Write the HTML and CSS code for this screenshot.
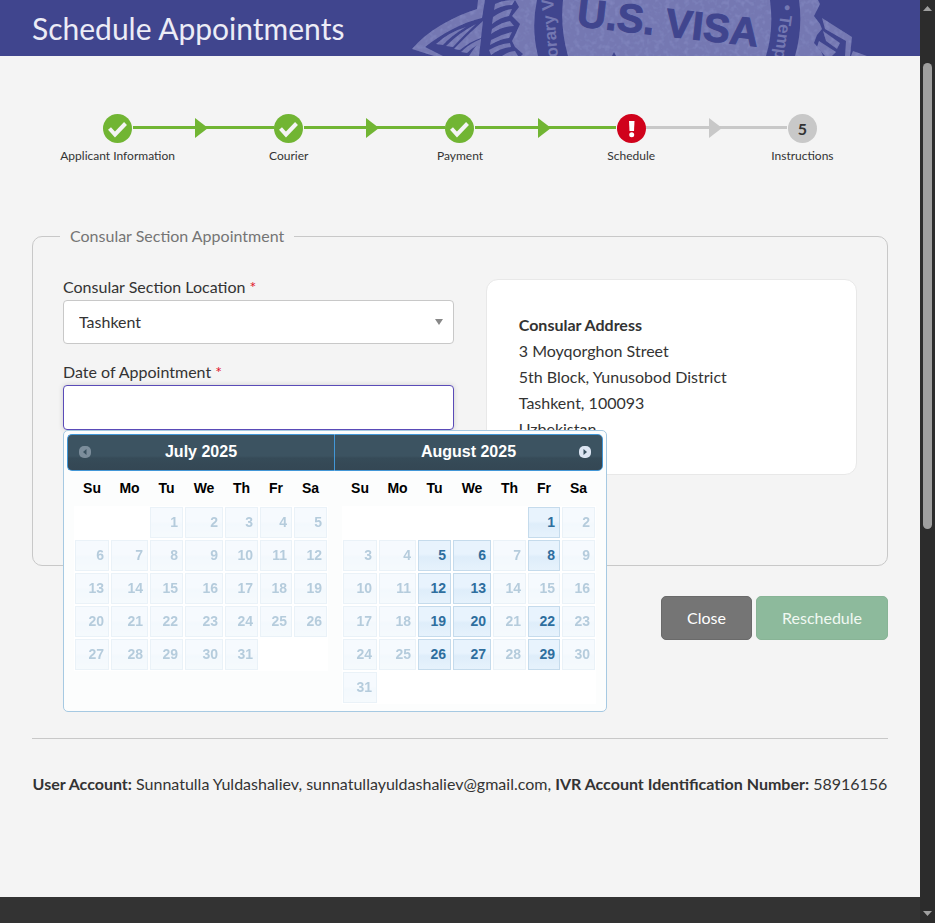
FILE: index.html
```html
<!DOCTYPE html>
<html lang="en">
<head>
<meta charset="utf-8">
<title>Schedule Appointments</title>
<link rel="stylesheet" href="styles.css">
</head>
<body>
<div class="page">
  <header class="banner">
    <h1>Schedule Appointments</h1>
    <svg class="stamp" width="465" height="56" viewBox="0 0 465 56" aria-hidden="true">
      <defs>
        <filter id="grain" x="0" y="0" width="100%" height="100%">
          <feTurbulence type="fractalNoise" baseFrequency="0.2" numOctaves="2" seed="4"/>
          <feColorMatrix values="0 0 0 0 .25  0 0 0 0 .27  0 0 0 0 .56  0 0 0 1.4 -.65"/>
          <feComposite in2="SourceGraphic" operator="in" result="n"/>
          <feMerge><feMergeNode in="SourceGraphic"/><feMergeNode in="n"/></feMerge>
        </filter>
      </defs>
      <g filter="url(#grain)">
        <path class="ink" d="M110 0H413L415 4L412 10L409 16L415 24L417 29L412 35L409 43L416 51L418 56H116L118 54L110 47L107 41L111 33L115 24L107 16L114 7Z"/>
        <path class="ink" fill-rule="evenodd" d="M73 0H80L77 18C58 22 35 35 20 47L38 56H29L7 49C22 31 47 17 72 9Z"/>
        <path class="ink" d="M31 44Q44 32 61 27Q46 36 38 45ZM41 46Q55 32 71 24Q58 36 48 47ZM49 49Q61 36 78 21L76 38Q66 41 55 50ZM56 52Q65 43 76 39L74 56H64Q69 48 72 45Q66 49 62 53Z"/>
        <path class="ink" d="M90 4Q97 0 110 0L107 5Q98 5 89 10ZM88 17Q98 10 107 9L104 16Q96 17 87 24ZM87 29Q97 22 105 21L109 26Q97 26 86 34ZM86 40Q96 34 107 32L104 38Q95 39 85 45ZM84 50Q94 44 105 43L106 47Q96 48 86 55ZM97 56Q104 51 110 51L113 56Z"/>
        <path class="ink" d="M417 18L447 37L445 56H440L441 41L420 29ZM418 31L435 43L432 49L421 41ZM414 41L431 52L427 56H420L412 47ZM448 51L462 56H446Z"/>
      </g>
      <path class="ring" d="M132 0H394Q398 28 390 56H133Q126 28 132 0Z"/>
      <path class="ink" filter="url(#grain)" d="M158 0H365Q369 30 361 56H163Q155 28 158 0Z"/>
      <path class="ring" d="M209 52L211 56H207Z"/>
      <text class="visa" transform="translate(171 26) rotate(6.500)">U.S. VISA</text>
      <text class="rim" transform="translate(153 57) rotate(-95)">orary V</text>
      <text class="rim" transform="translate(377 4) rotate(98)">• Temp</text>
    </svg>
  </header>

  <main>
    <ol class="steps">
      <li class="done"><span class="dot"><svg width="29" height="29" viewBox="0 0 29 29"><path d="M6.500 14.500L12 20.500L22.500 9.500" fill="none" stroke="#f4f4f4" stroke-width="4"/></svg></span><span class="name">Applicant Information</span></li>
      <li class="done"><span class="dot"><svg width="29" height="29" viewBox="0 0 29 29"><path d="M6.500 14.500L12 20.500L22.500 9.500" fill="none" stroke="#f4f4f4" stroke-width="4"/></svg></span><span class="name">Courier</span></li>
      <li class="done"><span class="dot"><svg width="29" height="29" viewBox="0 0 29 29"><path d="M6.500 14.500L12 20.500L22.500 9.500" fill="none" stroke="#f4f4f4" stroke-width="4"/></svg></span><span class="name">Payment</span></li>
      <li class="current"><span class="dot"><svg width="29" height="29" viewBox="0 0 29 29" fill="#fff"><path d="M12 7H17.500L17 17H12.500Z"/><circle cx="14.700" cy="20.700" r="2.500"/></svg></span><span class="name">Schedule</span></li>
      <li><span class="dot">5</span><span class="name">Instructions</span></li>
    </ol>

    <form>
      <fieldset>
        <legend>Consular Section Appointment</legend>
        <div class="fields">
          <div>
            <label for="location">Consular Section Location <span class="req">*</span></label>
            <div class="select-wrap">
              <select id="location"><option>Tashkent</option></select>
            </div>
            <label for="date">Date of Appointment <span class="req">*</span></label>
            <div class="date-wrap">
              <input id="date" type="text" autocomplete="off">
              <div class="picker">
                <section class="month first">
                  <div class="bar left"><button type="button" class="nav off" aria-label="Prev"><svg width="12" height="12" viewBox="0 0 12 12"><rect width="12" height="12" rx="5" fill="#dce5f2"/><path d="M7.500 3V9L4 6Z" fill="#38505f"/></svg></button><span>July 2025</span><i></i></div>
                  <table>
                    <thead><tr><th>Su</th><th>Mo</th><th>Tu</th><th>We</th><th>Th</th><th>Fr</th><th>Sa</th></tr></thead>
                    <tbody>
                      <tr><td></td><td></td><td><span>1</span></td><td><span>2</span></td><td><span>3</span></td><td><span>4</span></td><td><span>5</span></td></tr>
                      <tr><td><span>6</span></td><td><span>7</span></td><td><span>8</span></td><td><span>9</span></td><td><span>10</span></td><td><span>11</span></td><td><span>12</span></td></tr>
                      <tr><td><span>13</span></td><td><span>14</span></td><td><span>15</span></td><td><span>16</span></td><td><span>17</span></td><td><span>18</span></td><td><span>19</span></td></tr>
                      <tr><td><span>20</span></td><td><span>21</span></td><td><span>22</span></td><td><span>23</span></td><td><span>24</span></td><td><span>25</span></td><td><span>26</span></td></tr>
                      <tr><td><span>27</span></td><td><span>28</span></td><td><span>29</span></td><td><span>30</span></td><td><span>31</span></td><td></td><td></td></tr>
                    </tbody>
                  </table>
                </section>
                <section class="month">
                  <div class="bar right"><i></i><span>August 2025</span><button type="button" class="nav" aria-label="Next"><svg width="12" height="12" viewBox="0 0 12 12"><rect width="12" height="12" rx="5" fill="#dce5f2"/><path d="M4.500 3V9L8 6Z" fill="#38505f"/></svg></button></div>
                  <table>
                    <thead><tr><th>Su</th><th>Mo</th><th>Tu</th><th>We</th><th>Th</th><th>Fr</th><th>Sa</th></tr></thead>
                    <tbody>
                      <tr><td></td><td></td><td></td><td></td><td></td><td><a href="#">1</a></td><td><span>2</span></td></tr>
                      <tr><td><span>3</span></td><td><span>4</span></td><td><a href="#">5</a></td><td><a href="#">6</a></td><td><span>7</span></td><td><a href="#">8</a></td><td><span>9</span></td></tr>
                      <tr><td><span>10</span></td><td><span>11</span></td><td><a href="#">12</a></td><td><a href="#">13</a></td><td><span>14</span></td><td><span>15</span></td><td><span>16</span></td></tr>
                      <tr><td><span>17</span></td><td><span>18</span></td><td><a href="#">19</a></td><td><a href="#">20</a></td><td><span>21</span></td><td><a href="#">22</a></td><td><span>23</span></td></tr>
                      <tr><td><span>24</span></td><td><span>25</span></td><td><a href="#">26</a></td><td><a href="#">27</a></td><td><span>28</span></td><td><a href="#">29</a></td><td><span>30</span></td></tr>
                      <tr><td><span>31</span></td><td></td><td></td><td></td><td></td><td></td><td></td></tr>
                    </tbody>
                  </table>
                </section>
              </div>
            </div>
          </div>
          <address class="card"><strong>Consular Address</strong><br>3 Moyqorghon Street<br>5th Block, Yunusobod District<br>Tashkent, 100093<br>Uzbekistan</address>
        </div>
      </fieldset>
      <div class="actions">
        <button type="button" class="btn">Close</button>
        <button type="submit" class="btn go" disabled>Reschedule</button>
      </div>
    </form>
    <hr>
    <p class="account"><strong>User Account:</strong> Sunnatulla Yuldashaliev, sunnatullayuldashaliev@gmail.com, <strong>IVR Account Identification Number:</strong> 58916156</p>
  </main>
  <footer></footer>
</div>
<div class="scroll" aria-hidden="true">
  <svg width="9" height="5" viewBox="0 0 9 5"><path d="M0 5L4.500 0L9 5Z" fill="#9f9f9f"/></svg>
  <div class="track"><div class="thumb"></div></div>
  <svg width="9" height="5" viewBox="0 0 9 5"><path d="M0 0H9L4.500 5Z" fill="#9f9f9f"/></svg>
</div>
</body>
</html>
```
FILE: styles.css
```css
* { box-sizing: border-box; }
body {
  margin: 0;
  min-height: 100vh;
  display: flex;
  background: #f4f4f4;
  color: #333;
  font: 16px/26px Lato, "Liberation Sans", sans-serif;
}
.page { flex: 1; min-width: 0; display: flex; flex-direction: column; }

.banner {
  height: 56px;
  padding: 0 50px 0 32px;
  background: #40458e;
  display: flex;
  align-items: center;
  justify-content: space-between;
  overflow: hidden;
}
.banner h1 { margin: 0; font-size: 30px; line-height: 40px; font-weight: 400; color: #ececf6; white-space: nowrap; }
.stamp { flex: none; }
.ink { fill: #7478b2; }
.ring { fill: #40458e; }
.visa { font: bold 40px "Liberation Sans", sans-serif; fill: #40458e; stroke: #40458e; stroke-width: 1; }
.rim { font: bold 17px "Liberation Sans", sans-serif; fill: #7478b2; }

main { flex: 1; padding: 57px 32px 0; }

.steps { list-style: none; margin: 0; padding: 0; display: grid; grid-template-columns: repeat(5, 1fr); }
.steps li { position: relative; display: flex; flex-direction: column; align-items: center; --line: #c8c8c8; }
.steps .done { --line: #71b533; }
.steps li:not(:last-child)::before {
  content: "";
  position: absolute;
  top: 13px;
  left: calc(50% + 15px);
  width: calc(100% - 30px);
  height: 3px;
  background: var(--line);
}
.steps li:not(:last-child)::after {
  content: "";
  position: absolute;
  top: 5px;
  right: -5px;
  border: solid transparent;
  border-width: 10px 0 10px 13px;
  border-left-color: var(--line);
}
.dot {
  width: 29px;
  height: 29px;
  margin-top: 1px;
  border-radius: 50%;
  background: var(--line);
  display: grid;
  place-items: center;
  font-weight: 700;
}
.dot svg { display: block; }
.current .dot { background: #d0021b; }
.name { font-size: 12px; line-height: 16px; margin-top: 5px; }

fieldset { min-width: 0; margin: 59px 0 0; padding: 24px 30px 90px; border: 1px solid #c8c8c8; border-radius: 10px; }
legend { margin-left: -3px; padding: 0 10px; color: #757575; }
.fields { display: grid; grid-template-columns: 20fr 19fr; gap: 32px; align-items: start; padding-top: 6px; }
label { display: block; line-height: 22px; margin-top: -3px; }
.req { color: #e0142d; }
.select-wrap { position: relative; margin: 2px 0 20px; }
.select-wrap::after {
  content: "";
  position: absolute;
  right: 11px;
  top: 19px;
  border: solid transparent;
  border-width: 6px 4px 0;
  border-top-color: #888;
}
select, input {
  display: block;
  width: 100%;
  height: 44px;
  padding: 0 15px;
  border: 1px solid #c8c8c8;
  border-radius: 4px;
  background: #fff;
  color: #333;
  font: inherit;
  appearance: none;
}
.date-wrap { position: relative; margin-top: 2px; }
#date { height: 45px; border-color: #5a4bb8; box-shadow: 0 0 5px #ccc; outline: 0; }

.card {
  padding: 32px;
  border: 1px solid #e8e8e8;
  border-radius: 12px;
  background: #fff;
  font-style: normal;
  overflow-wrap: anywhere;
}

.picker {
  position: absolute;
  top: 45px;
  left: 0;
  z-index: 2;
  width: 544px;
  padding: 3px 3px 7px;
  display: flex;
  border: 1px solid #a6c9e2;
  border-radius: 5px;
  background: #fcfdfd;
  font-family: "Liberation Sans", sans-serif;
}
.month { flex: 1; min-width: 0; }
.first { flex: 0 0 267px; }
.bar {
  height: 37px;
  padding: 0 11px 1px;
  border: 1px solid #4297d7;
  background: linear-gradient(#3c5361 60%, #364b58 66%, #344754);
  color: #fff;
  display: flex;
  align-items: center;
  justify-content: space-between;
  font-weight: 700;
  line-height: 30px;
}
.bar i { width: 12px; }
.left { border-right: 0; border-radius: 5px 0 0 5px; }
.right { border-radius: 0 5px 5px 0; }
.nav { width: 12px; height: 12px; padding: 0; border: 0; background: none; display: block; }
.nav svg { display: block; }
.off { opacity: .4; }
table { width: 254px; margin: 0 8px; table-layout: fixed; border-collapse: collapse; font-size: 14px; line-height: 21px; }
.first table { margin: 0 7px; }
tbody { background: #fff; }
th { width: 35px; height: 35px; padding: 0; color: #000; }
th:nth-child(1) { width: 36px; }
th:nth-child(2) { width: 39px; }
th:nth-child(4) { width: 40px; }
th:nth-child(6) { width: 34px; }
td { height: 33px; padding: 1px; }
td span, td a {
  display: block;
  height: 31px;
  padding: 4px;
  border: 1px solid #c5dbec;
  background: linear-gradient(#e8f3fd 45%, #deedfa 55%, #e6f2fc);
  color: #2e6e9e;
  font-weight: 700;
  text-align: right;
  text-decoration: none;
}
td span { opacity: .35; }

.actions { display: flex; justify-content: flex-end; gap: 4px; margin-top: 30px; }
.btn {
  height: 44px;
  padding: 0 25px;
  border: 1px solid #6a6a6a;
  border-radius: 5px;
  background: #757575;
  color: #fff;
  font: inherit;
}
.go { border-color: #88b496; background: #8dba9c; color: #f0f8f2; }
hr { height: 1px; margin: 98px 0 0; border: 0; background: #c8c8c8; }
.account { margin: 32px 0 80px; text-align: center; }
footer { height: 26px; background: #333; }

.scroll { width: 15px; background: #2c2c2c; display: flex; flex-direction: column; align-items: center; padding: 6px 0 7px; }
.track { flex: 1; width: 9px; padding-top: 52px; }
.thumb { height: 55%; border-radius: 5px; background: #9f9f9f; }
```
